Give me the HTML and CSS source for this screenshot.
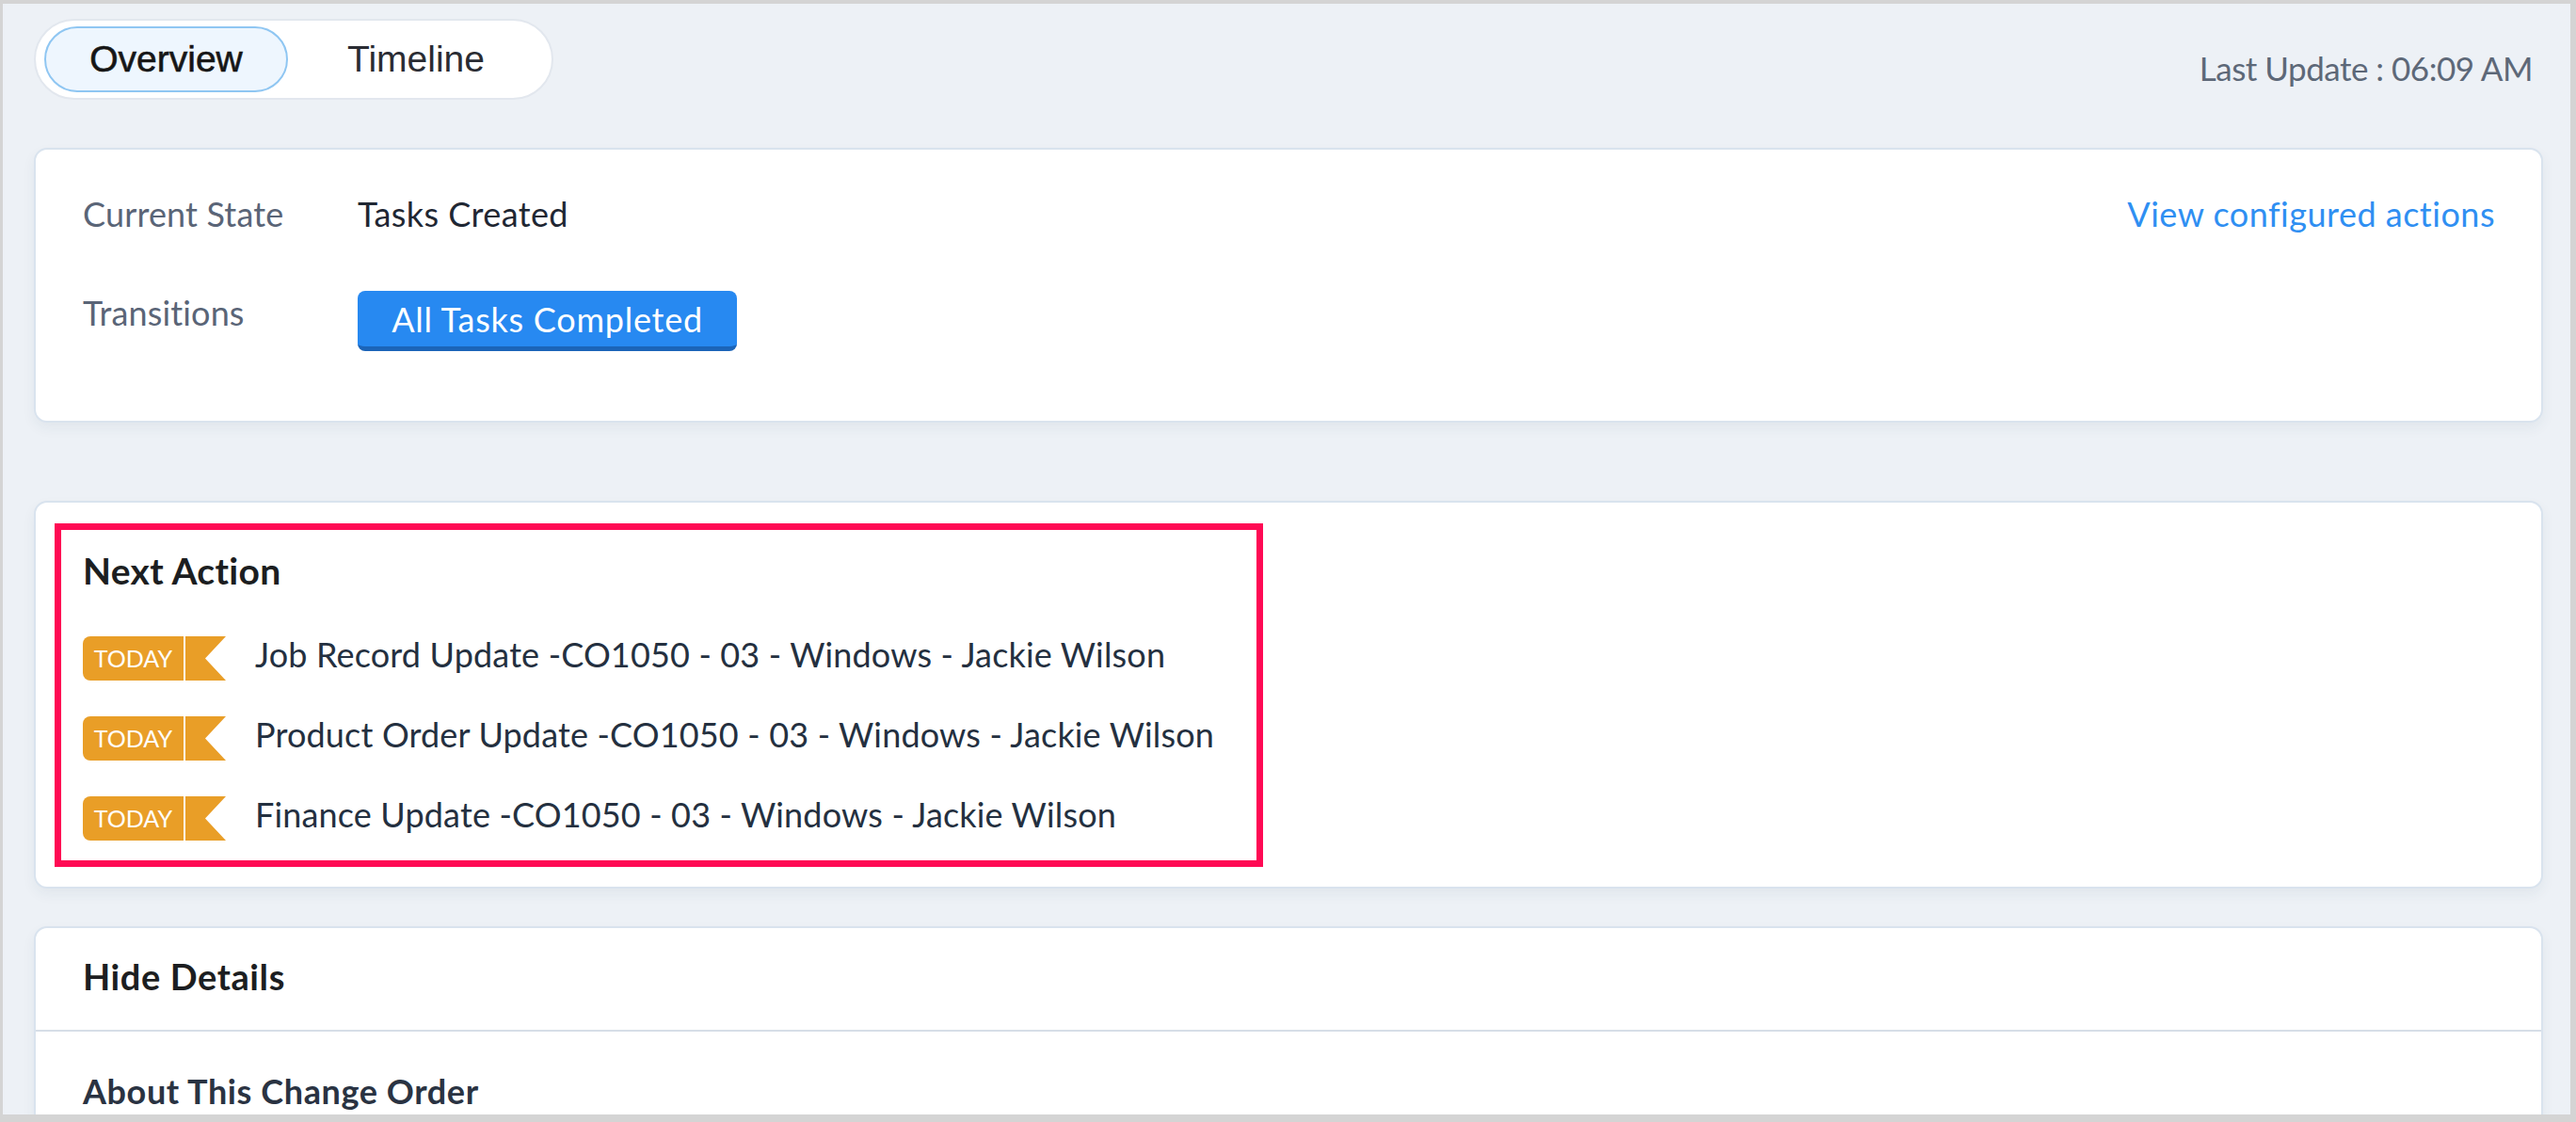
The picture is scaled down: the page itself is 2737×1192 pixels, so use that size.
FILE: index.html
```html
<!DOCTYPE html>
<html lang="en">
<head>
<meta charset="utf-8">
<title>Change Order Overview</title>
<link rel="stylesheet" href="styles.css">
</head>
<body>
<div class="frame">
  <div class="topbar">
    <div class="tabs">
      <div class="tab tab-active">Overview</div>
      <div class="tab">Timeline</div>
    </div>
    <div class="last-update">Last Update : 06:09 AM</div>
  </div>

  <section class="card card-state">
    <div class="state-row">
      <div class="state-label">Current State</div>
      <div class="state-value">Tasks Created</div>
      <a class="configured-link">View configured actions</a>
    </div>
    <div class="state-row state-row-second">
      <div class="state-label">Transitions</div>
      <button class="transition-btn">All Tasks Completed</button>
    </div>
  </section>

  <section class="card card-next">
    <div class="highlight-box">
      <h2 class="next-title">Next Action</h2>
      <ul class="action-list">
        <li class="action-item">
          <span class="badge"><span class="badge-label">TODAY</span><svg class="badge-tail" viewBox="0 0 43 47" width="43" height="47"><polygon points="0,0 43,0 21,23.5 43,47 0,47"/></svg></span>
          <span class="action-text">Job Record Update -CO1050 - 03 - Windows - Jackie Wilson</span>
        </li>
        <li class="action-item">
          <span class="badge"><span class="badge-label">TODAY</span><svg class="badge-tail" viewBox="0 0 43 47" width="43" height="47"><polygon points="0,0 43,0 21,23.5 43,47 0,47"/></svg></span>
          <span class="action-text">Product Order Update -CO1050 - 03 - Windows - Jackie Wilson</span>
        </li>
        <li class="action-item">
          <span class="badge"><span class="badge-label">TODAY</span><svg class="badge-tail" viewBox="0 0 43 47" width="43" height="47"><polygon points="0,0 43,0 21,23.5 43,47 0,47"/></svg></span>
          <span class="action-text">Finance Update -CO1050 - 03 - Windows - Jackie Wilson</span>
        </li>
      </ul>
    </div>
  </section>

  <section class="card card-details">
    <div class="details-head">Hide Details</div>
    <div class="details-body">
      <h3 class="details-title">About This Change Order</h3>
    </div>
  </section>
</div>
</body>
</html>
```

FILE: styles.css
```css
html, body {
  margin: 0;
  padding: 0;
}

body {
  font-family: Lato, "Open Sans", "Liberation Sans", sans-serif;
  background: #d4d4d4;
}

.frame {
  box-sizing: border-box;
  width: 2737px;
  height: 1192px;
  overflow: hidden;
  border-style: solid;
  border-color: #d4d4d4;
  border-width: 4px 6px 8px 3px;
  background: #edf1f6;
  padding: 16px 29px 0 33px;
}

/* ---------- top bar ---------- */
.topbar {
  display: flex;
  justify-content: space-between;
  align-items: flex-start;
  height: 137px;
}

.tabs {
  display: flex;
  align-items: center;
  box-sizing: border-box;
  height: 86px;
  padding: 6px 22px 6px 9px;
  gap: 14px;
  background: #ffffff;
  border: 2px solid #e2e7ee;
  border-radius: 43px;
}

.tab {
  box-sizing: border-box;
  height: 70px;
  padding: 0 47px;
  display: flex;
  align-items: center;
  font-family: "Liberation Sans", Arial, sans-serif;
  font-size: 39px;
  color: #2a2c33;
  border: 2px solid transparent;
  border-radius: 35px;
}

.tab-active {
  width: 259px;
  justify-content: center;
  padding: 0;
  color: #161616;
  background: #eef6fe;
  border-color: #8fc6f2;
  -webkit-text-stroke: 0.6px #161616;
}

.last-update {
  margin-top: 35px;
  margin-right: 11px;
  font-size: 35px;
  line-height: 35px;
  letter-spacing: -0.5px;
  color: #5d6878;
}

/* ---------- cards ---------- */
.card {
  box-sizing: border-box;
  background: #ffffff;
  border: 2px solid #d9e3ee;
  border-radius: 14px;
  box-shadow: 0 6px 14px rgba(40, 60, 90, 0.06);
}

.card-state {
  height: 292px;
  padding: 43px 49px 0 50px;
}

.state-row {
  display: flex;
  align-items: flex-start;
  font-size: 36px;
  line-height: 50px;
}

.state-row-second {
  margin-top: 55px;
}

.state-label {
  width: 292px;
  flex: none;
  color: #5a6577;
  letter-spacing: 0.15px;
}

.state-value {
  color: #1f2733;
  letter-spacing: 0.4px;
}

.configured-link {
  margin-left: auto;
  color: #2f8ff2;
  letter-spacing: 0.5px;
  cursor: pointer;
}

.transition-btn {
  box-sizing: border-box;
  margin-top: 2px;
  width: 403px;
  height: 64px;
  padding: 2px 0 0;
  font-family: inherit;
  font-size: 36px;
  line-height: 57px;
  letter-spacing: 0.75px;
  color: #ffffff;
  background: #2789f1;
  border: none;
  border-bottom: 5px solid #1b64b8;
  border-radius: 8px;
  cursor: pointer;
}

/* ---------- next action ---------- */
.card-next {
  margin-top: 83px;
  padding: 22px 20px 21px;
}

.highlight-box {
  box-sizing: border-box;
  width: 1284px;
  border: 7px solid #ff0a54;
  padding: 24px 0 21px 23px;
}

.next-title {
  margin: 0;
  font-size: 39px;
  line-height: 39px;
  font-weight: 700;
  letter-spacing: 0.3px;
  color: #1c1e21;
}

.action-list {
  list-style: none;
  margin: 50px 0 0;
  padding: 0;
  display: flex;
  flex-direction: column;
  gap: 38px;
}

.action-item {
  display: flex;
  align-items: flex-start;
  height: 47px;
}

.badge {
  display: flex;
  flex: none;
  height: 47px;
  gap: 2px;
}

.badge-label {
  box-sizing: border-box;
  width: 107px;
  height: 47px;
  text-align: center;
  font-size: 25px;
  line-height: 47px;
  color: #ffffff;
  background: #e99e27;
  border-radius: 8px 0 0 8px;
}

.badge-tail {
  display: block;
  fill: #e99e27;
}

.action-text {
  margin-left: 31px;
  font-size: 36px;
  line-height: 38px;
  letter-spacing: 0.16px;
  color: #243040;
  white-space: nowrap;
}

/* ---------- details ---------- */
.card-details {
  margin-top: 40px;
  height: 400px;
}

.details-head {
  padding: 32px 0 38px 50px;
  font-size: 38px;
  line-height: 38px;
  font-weight: 700;
  letter-spacing: 0.6px;
  color: #1c1e21;
  border-bottom: 2px solid #d6dee7;
}

.details-body {
  padding: 45px 50px 0;
}

.details-title {
  margin: 0;
  font-size: 36px;
  line-height: 36px;
  font-weight: 700;
  letter-spacing: 0.6px;
  color: #2a3342;
}
```
